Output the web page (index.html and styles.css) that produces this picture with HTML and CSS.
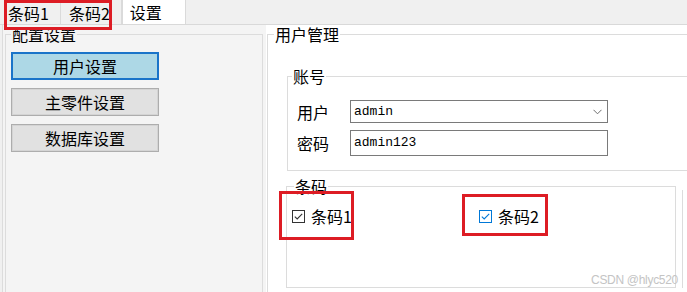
FILE: index.html
```html
<!DOCTYPE html>
<html lang="zh-CN">
<head>
  <meta charset="UTF-8">
  <meta name="viewport" content="width=device-width, initial-scale=1.0">
  <title>设置</title>
  <link rel="stylesheet" href="styles.css">
</head>
<body>
  <div class="tabs">
    <div class="tab">条码1</div>
    <div class="tab">条码2</div>
    <div class="tab active">设置</div>
  </div>

  <div class="page">
    <div class="left">
      <fieldset class="group side-group">
        <legend>配置设置</legend>
        <div class="menu">
          <button class="menu-btn selected">用户设置</button>
          <button class="menu-btn">主零件设置</button>
          <button class="menu-btn">数据库设置</button>
        </div>
      </fieldset>
    </div>

    <div class="right">
      <fieldset class="group main-group">
        <legend>用户管理</legend>

        <fieldset class="group account">
          <legend>账号</legend>
          <div class="field">
            <label>用户</label>
            <div class="combo">
              <span>admin</span>
              <svg width="9" height="6" viewBox="0 0 9 6"><polyline points="0.5,0.8 4.5,4.8 8.5,0.8" fill="none" stroke="#6d6d6d" stroke-width="1"/></svg>
            </div>
          </div>
          <div class="field">
            <label>密码</label>
            <div class="textbox">admin123</div>
          </div>
        </fieldset>

        <div class="bottom-row">
          <fieldset class="group barcode">
            <legend>条码</legend>
            <div class="checks">
              <label class="check">
                <svg class="box" width="13" height="13" viewBox="0 0 13 13"><rect x="0.5" y="0.5" width="12" height="12" fill="#fff" stroke="#333"/><polyline points="2.8,6.6 5.2,9 10.2,3.8" fill="none" stroke="#333" stroke-width="1.1"/></svg>
                条码1
              </label>
              <label class="check check-hover">
                <svg class="box" width="13" height="13" viewBox="0 0 13 13"><rect x="0.5" y="0.5" width="12" height="12" fill="#fff" stroke="#0078d7"/><polyline points="2.8,6.6 5.2,9 10.2,3.8" fill="none" stroke="#0078d7" stroke-width="1.1"/></svg>
                条码2
              </label>
            </div>
          </fieldset>
          <div class="side-box"></div>
        </div>
      </fieldset>
    </div>
  </div>

  <!-- red annotation frames -->
  <div class="mark mark-tabs"></div>
  <div class="mark mark-check1"></div>
  <div class="mark mark-check2"></div>

  <div class="watermark">CSDN @hlyc520</div>
</body>
</html>
```

FILE: styles.css
```css
body {
  margin: 0;
  width: 687px;
  height: 292px;
  overflow: hidden;
  position: relative;
  background-color: #f0f0f0;
  font-family: "Noto Sans CJK SC", sans-serif;
  font-size: 16px;
  line-height: 20px;
  color: #000;
}

/* tab strip */
.tabs {
  display: flex;
  height: 24px;
  border-bottom: 1px solid #d9d9d9;
}
.tab {
  padding: 2px 11px 0 8px;
  line-height: 22px;
  border-right: 1px solid #dadada;
}
.tab.active {
  padding: 1px 23px 0 7px;
  background-color: #fff;
  border-left: 1px solid #dadada;
}

/* page */
.page {
  display: flex;
  height: 267px;
}
.group {
  margin: 0;
  border: 1px solid #dcdcdc;
  min-width: 0;
}
.group legend {
  padding: 0 1px;
  line-height: 19px;
}

.left {
  width: 264px;
  flex-shrink: 0;
  box-sizing: border-box;
  margin-left: 2px;
  padding-left: 2px;
  border-left: 1px solid #dcdcdc;
  background-color: #f4f4f4;
}
.side-group {
  width: 258px;
  height: 280px;
  box-sizing: border-box;
  padding: 0 5px;
}
.menu {
  margin-top: 8px;
  display: flex;
  flex-direction: column;
  gap: 8px;
}
.menu-btn {
  width: 148px;
  height: 28px;
  padding: 0;
  font-family: "Noto Sans CJK SC", sans-serif;
  font-size: 16px;
  line-height: 24px;
  color: #000;
  background-color: #e1e1e1;
  border: 1px solid #adadad;
  box-shadow: inset 0 0 0 1px #d4d4d4;
}
.menu-btn.selected {
  background-color: #add8e6;
  border: 2px solid #1a74c9;
  box-shadow: none;
}

.right {
  flex: 1;
  padding-left: 1px;
  background-color: #fff;
}
.main-group {
  width: 460px;
  height: 280px;
  box-sizing: border-box;
  padding: 0 0 0 6px;
}

.account {
  width: 420px;
  margin: 23px 0 0 13px;
  padding: 0 0 14px 4px;
}
.field {
  display: flex;
  align-items: center;
  margin-top: 7px;
}
.field:first-of-type {
  margin-top: 14px;
}
.field label {
  width: 53px;
  margin-left: 5px;
}
.combo, .textbox {
  width: 258px;
  box-sizing: border-box;
  border: 1px solid #7a7a7a;
  padding-left: 3px;
  font-family: "Liberation Mono", monospace;
  font-size: 13px;
  background-color: #fff;
}
.combo {
  height: 23px;
  line-height: 21px;
  display: flex;
  justify-content: space-between;
  align-items: center;
  padding-right: 5px;
}
.textbox {
  height: 26px;
  line-height: 24px;
}

.bottom-row {
  display: flex;
  margin-top: 6px;
}
.barcode {
  width: 390px;
  box-sizing: border-box;
  margin-left: 12px;
  padding: 0 0 61px 7px;
}
.checks {
  display: flex;
  margin: 10px 0 0 -2px;
}
.check {
  display: flex;
  align-items: center;
  gap: 6px;
  height: 20px;
}
.check-hover {
  margin-left: 127px;
}
.side-box {
  margin: 13px 0 0 6px;
  width: 40px;
  border-left: 1px solid #dcdcdc;
}

/* annotations */
.mark {
  position: absolute;
  box-sizing: border-box;
  border: 3px solid #dd1c24;
}
.mark-tabs {
  left: 4px;
  top: 0;
  width: 108px;
  height: 30px;
}
.mark-check1 {
  left: 279px;
  top: 191px;
  width: 75px;
  height: 49px;
}
.mark-check2 {
  left: 462px;
  top: 194px;
  width: 86px;
  height: 42px;
}

.watermark {
  position: absolute;
  right: 9px;
  top: 270px;
  font-family: "Liberation Sans", sans-serif;
  font-size: 12px;
  letter-spacing: -0.3px;
  color: #c4c4c4;
}
```
